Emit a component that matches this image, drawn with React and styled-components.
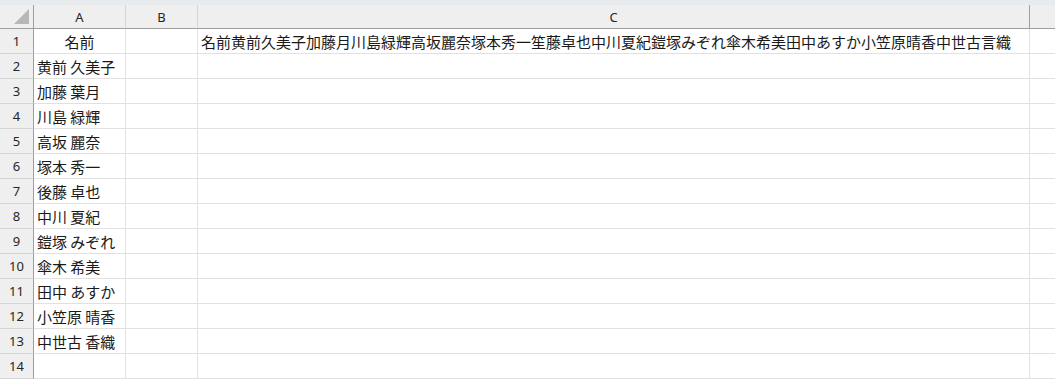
import styled, { createGlobalStyle } from 'styled-components';

const GlobalStyle = createGlobalStyle`
    html, body {
        margin: 0;
        padding: 0;
        background: #ffffff;
    }
    body {
        font-family: "Noto Sans CJK JP", "Noto Sans", sans-serif;
        overflow: hidden;
    }
`;

const Page = styled.div`
    width: 1055px;
    height: 380px;
    overflow: hidden;
    background: #ffffff;
`;

const TopStrip = styled.div`
    height: 5px;
    background: #e8ebee;
`;

const Sheet = styled.div`
    display: grid;
    grid-template-columns: 34px 92px 72px 832px 60px;
    grid-template-rows: 24px;
    grid-auto-rows: 25px;
`;

const Corner = styled.div`
    position: relative;
    background: #efefef;
    border-right: 1px solid #9e9e9e;
    border-bottom: 1px solid #9e9e9e;
    box-sizing: border-box;

    & svg {
        position: absolute;
        right: 4px;
        bottom: 4px;
    }
`;

const ColHeader = styled.div`
    display: flex;
    align-items: center;
    justify-content: center;
    background: #efefef;
    color: #262626;
    font-family: "Noto Sans", "Liberation Sans", sans-serif;
    font-size: 13px;
    border-right: 1px solid ${p => (p.$last ? '#9e9e9e' : '#d4d4d4')};
    border-bottom: 1px solid #9e9e9e;
    box-sizing: border-box;
`;

const RowHeader = styled.div`
    display: flex;
    align-items: center;
    justify-content: center;
    background: #efefef;
    color: #262626;
    font-family: "Noto Sans", "Liberation Sans", sans-serif;
    font-size: 13px;
    border-right: 1px solid #9e9e9e;
    border-bottom: 1px solid #d4d4d4;
    box-sizing: border-box;
`;

const Cell = styled.div`
    display: flex;
    align-items: center;
    justify-content: ${p => (p.$center ? 'center' : 'flex-start')};
    padding: 0 3px;
    color: #1a1a1a;
    font-size: 15px;
    white-space: nowrap;
    overflow: visible;
    border-right: 1px solid #e1e1e1;
    border-bottom: 1px solid #e1e1e1;
    box-sizing: border-box;
    line-height: 1;
`;

const names = [
    '黄前 久美子',
    '加藤 葉月',
    '川島 緑輝',
    '高坂 麗奈',
    '塚本 秀一',
    '後藤 卓也',
    '中川 夏紀',
    '鎧塚 みぞれ',
    '傘木 希美',
    '田中 あすか',
    '小笠原 晴香',
    '中世古 香織',
];

const joined = '名前黄前久美子加藤月川島緑輝高坂麗奈塚本秀一笙藤卓也中川夏紀鎧塚みぞれ傘木希美田中あすか小笠原晴香中世古言織';

const columns = ['A', 'B', 'C', ''];

const App = () => {
    const rows = [];
    for (let r = 1; r <= 14; r++) {
        let a = '';
        let center = false;
        if (r === 1) {
            a = '名前';
            center = true;
        } else if (r <= 13) {
            a = names[r - 2];
        }
        rows.push(
            <RowHeader key={`h${r}`}>{r}</RowHeader>,
            <Cell key={`a${r}`} $center={center}>{a}</Cell>,
            <Cell key={`b${r}`} />,
            <Cell key={`c${r}`}>{r === 1 ? joined : ''}</Cell>,
            <Cell key={`d${r}`} />
        );
    }

    return (
        <Page>
            <GlobalStyle />
            <TopStrip />
            <Sheet>
                <Corner>
                    <svg width="15" height="15" viewBox="0 0 15 15">
                        <polygon points="15,0 15,15 0,15" fill="#b7b7b7" />
                    </svg>
                </Corner>
                {columns.map((c, i) => (
                    <ColHeader key={i} $last={i === 2}>{c}</ColHeader>
                ))}
                {rows}
            </Sheet>
        </Page>
    );
};

export default App;
